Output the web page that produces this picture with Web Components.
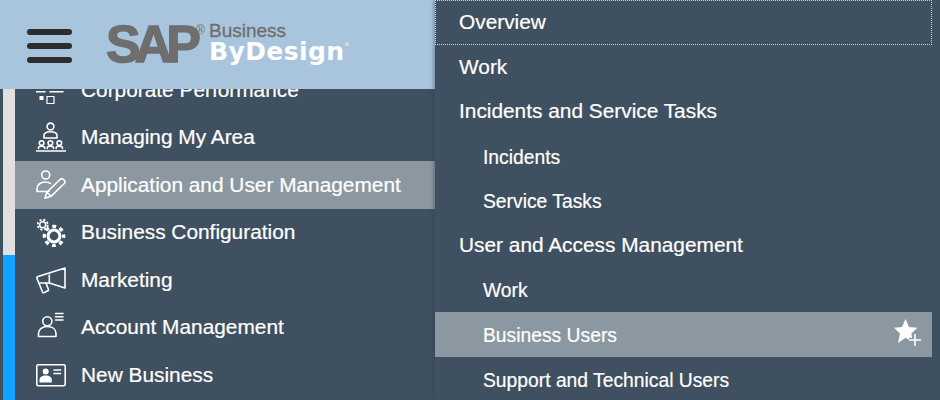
<!DOCTYPE html>
<html lang="en">
<head>
<meta charset="utf-8">
<title>SAP Business ByDesign</title>
<style>
  html, body { margin: 0; height: 100%; overflow: hidden; background: #3f5060; }
  body { font-family: "Liberation Sans", Arial, sans-serif; color: #fff; }
  svg { display: block; fill: none; stroke: #fff; stroke-width: 1.6; stroke-linecap: round; stroke-linejoin: round; }
  svg .solid { fill: #fff; stroke: none; }
</style>
</head>
<body>
<bd-shell>
  <bd-header slot="head"></bd-header>

  <bd-nav slot="nav">
    <bd-nav-item>
      <svg slot="icon" width="30" height="30" viewBox="0 0 30 30"><path d="M0 16.7H9M14 16.7H27"/><rect class="solid" x="3.5" y="21" width="4" height="4"/><rect x="11" y="21.5" width="7" height="7" stroke-width="1.2"/></svg>
      Corporate Performance
    </bd-nav-item>
    <bd-nav-item>
      <svg slot="icon" width="30" height="30" viewBox="0 0 30 30"><circle cx="14.5" cy="4.5" r="3.4"/><path d="M8 16V13.5C8 11 10.5 9.8 14.5 9.8S21 11 21 13.5V16Z"/><circle cx="5.6" cy="21" r="2.3"/><circle cx="14.4" cy="21" r="2.3"/><circle cx="23.3" cy="21" r="2.3"/><path d="M2.5 26.5V25.5C2.5 24.6 4 24.2 5.6 24.2S8.7 24.6 8.7 25.5V26.5M11.3 26.5V25.5C11.3 24.6 12.8 24.2 14.4 24.2S17.5 24.6 17.5 25.5V26.5M20.2 26.5V25.5C20.2 24.6 21.7 24.2 23.3 24.2S26.4 24.6 26.4 25.5V26.5"/><path d="M0.5 29H29.5"/></svg>
      Managing My Area
    </bd-nav-item>
    <bd-nav-item active>
      <svg slot="icon" width="30" height="30" viewBox="0 0 30 30"><circle cx="9.7" cy="5" r="4"/><path d="M13 21.5H1V18.5C1 14.5 5 12 9 12C11 12 13 12.5 14.5 13.5"/><path d="M9 28.3L10.8 22.3L24 9.5C25 8.5 26.5 8.5 27.5 9.5L28.3 10.3C29.2 11.3 29.2 12.5 28.3 13.5L15 26.3Z"/><path d="M11 22.5L14.8 26"/></svg>
      Application and User Management
    </bd-nav-item>
    <bd-nav-item>
      <svg slot="icon" width="30" height="30" viewBox="0 0 30 30"><circle cx="6.7" cy="7.7" r="3" stroke-width="1.5"/><circle cx="6.7" cy="7.7" r="5" stroke-width="1.8" stroke-dasharray="2.2 1.73" stroke-linecap="butt"/><circle cx="18" cy="19" r="5.9" stroke-width="3"/><circle cx="18" cy="19" r="9.6" stroke-width="3.4" stroke-dasharray="3.9 3.64" stroke-dashoffset="2" stroke-linecap="butt"/></svg>
      Business Configuration
    </bd-nav-item>
    <bd-nav-item>
      <svg slot="icon" width="30" height="30" viewBox="0 0 30 30"><path d="M29 3L2 11.5C.8 12 .6 12.6 1 13.5L6.5 27C6.9 27.9 7.4 28 8.2 27.6L11.8 25.8C12.5 25.5 12.6 25 12.4 24.4L10 18L13.3 18L29 23Z"/><path d="M13.3 10V18M3.5 18H10"/></svg>
      Marketing
    </bd-nav-item>
    <bd-nav-item>
      <svg slot="icon" width="30" height="30" viewBox="0 0 30 30"><circle cx="11.3" cy="9.3" r="4.6"/><path d="M2.5 24.5V21.5C2.5 17 6.5 14.5 11.3 14.5S20 17 20 21.5V24.5Z"/><path d="M19.5 1.5H27M19.5 4.7H27M19.5 8H27"/></svg>
      Account Management
    </bd-nav-item>
    <bd-nav-item>
      <svg slot="icon" width="30" height="30" viewBox="0 0 30 30"><rect x="0.8" y="4.8" width="28.4" height="21" rx="1.5"/><circle class="solid" cx="9.7" cy="11.5" r="3"/><path class="solid" d="M3.5 22.5V20C3.5 17 6 15.5 9.7 15.5S15.8 17 15.8 20V22.5Z"/><path d="M18 10H24.5M18 13.5H24.5"/></svg>
      New Business
    </bd-nav-item>
  </bd-nav>

  <bd-flyout slot="menu">
    <bd-fly-item focused>Overview</bd-fly-item>
    <bd-fly-item>Work</bd-fly-item>
    <bd-fly-item>Incidents and Service Tasks</bd-fly-item>
    <bd-fly-item sub>Incidents</bd-fly-item>
    <bd-fly-item sub>Service Tasks</bd-fly-item>
    <bd-fly-item>User and Access Management</bd-fly-item>
    <bd-fly-item sub>Work</bd-fly-item>
    <bd-fly-item sub active>Business Users
      <svg slot="end" width="30" height="30" viewBox="0 0 30 30"><path class="solid" d="M11.5 1L15 9L23.5 9.8L17.3 15.5L19 24L11.5 19.7L4 25L6 15.5L0 9.8L8 9Z"/><path d="M21 16V28M15 22H27" stroke="#8c98a1" stroke-width="4.5" stroke-linecap="butt"/><path d="M21 16V28M15 22H27" stroke-width="1.5" stroke-linecap="butt"/></svg>
    </bd-fly-item>
    <bd-fly-item sub>Support and Technical Users</bd-fly-item>
  </bd-flyout>
</bd-shell>

<script>
;(function scriptLoaded() {
  "use strict"

  // small helper, every element below is the same apart from its markup
  function define(name, markup) {
    const template = document.createElement("template")
    template.innerHTML = markup

    customElements.define(name, class extends HTMLElement {
      constructor() {
        super()
        this.attachShadow({ mode: "open" })
        this.shadowRoot.appendChild(template.content.cloneNode(true))
      }
    })
  }


  define("bd-shell", `
    <style>
      :host { display: grid; grid-template-columns: 435px 1fr; width: 940px; height: 400px; overflow: hidden; }
      .left { display: flex; flex-direction: column; min-height: 0; }
      ::slotted([slot=head]) { flex: none; position: relative; z-index: 1; }
      ::slotted([slot=nav]) { flex: 1; min-height: 0; }
    </style>
    <div class="left">
      <slot name="head"></slot>
      <slot name="nav"></slot>
    </div>
    <slot name="menu"></slot>
  `)


  define("bd-header", `
    <style>
      :host { display: flex; align-items: center; gap: 34px; height: 89px; padding-left: 27px; background: #a9c5de; }
      .burger { display: flex; flex-direction: column; gap: 8px; width: 45px; margin-top: 3px; }
      .burger span { height: 6px; border-radius: 3px; background: #2d2d2d; }
    </style>
    <div class="burger"><span></span><span></span><span></span></div>
    <bd-logo></bd-logo>
  `)


  define("bd-logo", `
    <style>
      :host { display: flex; align-items: flex-start; height: 47px; font-family: "Liberation Sans", Arial, sans-serif; }
      .sap { width: 90px; font-size: 52px; line-height: 47px; font-weight: bold; letter-spacing: -6px; color: #6e6e6e; -webkit-text-stroke: 1.4px #6e6e6e; }
      .reg { width: 13px; font-size: 12px; line-height: 14px; margin-top: 2px; color: #6e6e6e; }
      .words { display: flex; flex-direction: column; }
      .business { font-size: 19px; line-height: 18px; margin-top: 1px; color: #6e6e6e; -webkit-text-stroke: .3px #6e6e6e; }
      .design { font-family: "DejaVu Sans", sans-serif; font-size: 25px; line-height: 24px; font-weight: bold; color: #fff; letter-spacing: .4px; }
      .design sup { font-size: 5px; letter-spacing: 0; font-weight: normal; vertical-align: 14px; line-height: 0; }
    </style>
    <span class="sap">SAP</span>
    <span class="reg">®</span>
    <div class="words">
      <span class="business">Business</span>
      <span class="design">ByDesign<sup>®</sup></span>
    </div>
  `)


  define("bd-nav", `
    <style>
      :host { display: grid; grid-template-columns: 3px 12px 1fr; overflow: hidden; background: #3f5060; }
      .track { grid-column: 2; display: flex; flex-direction: column; }
      .thumb { height: 166px; background: #e0e0e0; }
      .rest { flex: 1; background: #0fa5ff; }
      .list { display: flex; flex-direction: column; margin-top: -23px; min-width: 0; }
    </style>
    <div class="track"><div class="thumb"></div><div class="rest"></div></div>
    <div class="list"><slot></slot></div>
  `)


  define("bd-nav-item", `
    <style>
      :host { display: flex; align-items: center; gap: 15px; flex: none; height: 47.5px; padding-left: 21px; font-size: 20.85px; white-space: nowrap; -webkit-text-stroke: .2px #fff; }
      :host([active]) { background: #8c98a1; }
      ::slotted(svg) { flex: none; }
    </style>
    <slot name="icon"></slot>
    <span><slot></slot></span>
  `)


  define("bd-flyout", `
    <style>
      :host { display: block; padding-right: 8px; overflow: hidden; background: #3f5060; box-shadow: -2px 0 3px rgba(40, 60, 80, .35); position: relative; z-index: 2; }
    </style>
    <slot></slot>
  `)


  define("bd-fly-item", `
    <style>
      :host { display: flex; align-items: center; justify-content: space-between; box-sizing: border-box; height: 44.6px; padding: 0 8px 0 24px; font-size: 20.85px; white-space: nowrap; -webkit-text-stroke: .2px #fff; }
      :host([sub]) { padding-top: 3px; padding-left: 48px; font-size: 19.3px; }
      :host([active]) { background: #8c98a1; }
      :host([focused]) { border: 1px dotted #cfd4d8; padding-left: 23px; }
      ::slotted(svg) { margin-top: -5px; }
    </style>
    <span><slot></slot></span>
    <slot name="end"></slot>
  `)
})()
</script>
</body>
</html>
